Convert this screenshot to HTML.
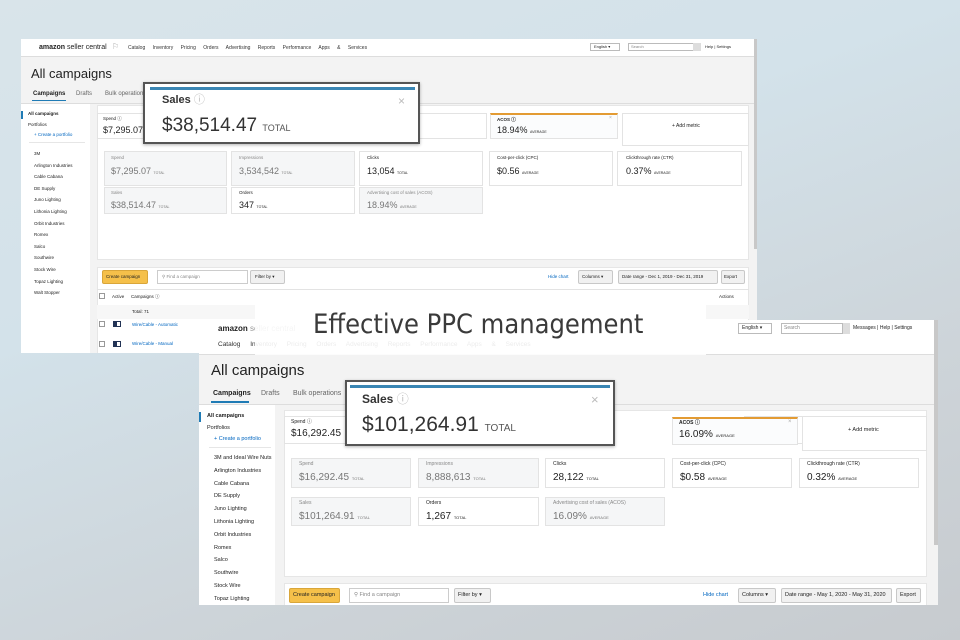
<!DOCTYPE html>
<html><head><meta charset="utf-8"><style>
*{margin:0;padding:0;box-sizing:border-box}
body{width:960px;height:640px;overflow:hidden;position:relative;background:linear-gradient(160deg,#d9e4ea 0%,#d3e2ea 35%,#cdd4d9 70%,#c7cbcf 100%);font-family:"Liberation Sans Narrow","Liberation Sans",sans-serif;color:#222}
div,span{position:absolute}
.t{white-space:nowrap;line-height:1}
.w{background:#fff}
.g{background:#f3f3f3}
.card{background:#fff;border:1px solid #e3e3e3}
.cg{background:#f5f6f7;border:1px solid #e3e3e3}
.lnk{color:#0066c0}
.btn{background:#f1f1f1;border:1px solid #c8c8c8;border-radius:2px}
</style></head><body>

<!-- ===== Screenshot 1 ===== -->
<div class="g" style="left:21px;top:39px;width:736px;height:314px;overflow:hidden">
  <div class="w" style="left:0;top:0;width:736px;height:18px;border-bottom:1px solid #ddd"></div>
  <span class="t" style="left:18px;top:5px;font-size:7px;font-weight:bold">amazon <span style="position:static;font-weight:normal">seller central</span></span>
  <span class="t" style="left:91px;top:4px;font-size:8px;color:#aaa">⚐</span>
  <span class="t" style="left:107px;top:7px;font-size:5px;color:#333;word-spacing:6px">Catalog Inventory Pricing Orders Advertising Reports Performance Apps&nbsp;&amp;&nbsp;Services</span>
  <div style="left:569px;top:4px;width:30px;height:8px;border:1px solid #bbb;background:#fff"></div>
  <span class="t" style="left:573px;top:6px;font-size:4px">English ▾</span>
  <div style="left:607px;top:4px;width:66px;height:8px;border:1px solid #bbb;background:#fff"></div>
  <div style="left:672px;top:4px;width:8px;height:8px;background:#ddd"></div>
  <span class="t" style="left:610px;top:6px;font-size:4px;color:#888">Search</span>
  <span class="t" style="left:684px;top:6px;font-size:4px">Help | Settings</span>
  <span class="t" style="left:10px;top:28px;font-size:13px">All campaigns</span>
  <span class="t" style="left:12px;top:52px;font-size:6px;font-weight:bold">Campaigns</span>
  <span class="t" style="left:55px;top:52px;font-size:6px;color:#666">Drafts</span>
  <span class="t" style="left:84px;top:52px;font-size:6px;color:#666">Bulk operations</span>
  <div style="left:11px;top:61px;width:34px;height:1px;background:#1f7bb5"></div>
  <div style="left:0;top:64px;width:736px;height:1px;background:#ddd"></div>
  <div class="w" style="left:0;top:65px;width:69px;height:250px"></div>
  <div style="left:0;top:72px;width:2px;height:8px;background:#1f7bb5"></div>
  <span class="t" style="left:7px;top:73px;font-size:4.5px;font-weight:bold">All campaigns</span>
  <span class="t" style="left:7px;top:84px;font-size:4.5px">Portfolios</span>
  <span class="t lnk" style="left:13px;top:94px;font-size:4.5px">+ Create a portfolio</span>
  <div style="left:8px;top:103px;width:56px;height:1px;background:#e6e6e6"></div>
  <span class="t" style="left:13px;top:109px;font-size:4.5px;line-height:11.6px;white-space:pre">3M
Arlington Industries
Cable Cabana
DE Supply
Juno Lighting
Lithonia Lighting
Orbit Industries
Romex
Salco
Southwire
Stock Wire
Topaz Lighting
Walt Stopper</span>
  <div class="w" style="left:76px;top:66px;width:652px;height:155px;border:1px solid #e6e6e6"></div>
  <div class="card" style="left:76px;top:74px;width:130px;height:26px"></div>
  <span class="t" style="left:82px;top:78px;font-size:4.5px">Spend ⓘ</span>
  <span class="t" style="left:82px;top:87px;font-size:9px">$7,295.07</span>
  <div class="card" style="left:346px;top:74px;width:120px;height:26px"></div>
  <div class="card" style="left:469px;top:74px;width:128px;height:26px;border-top:2px solid #e39b33;background:#fbfcfd"></div>
  <span class="t" style="left:476px;top:79px;font-size:4.5px;font-weight:bold">ACOS ⓘ</span>
  <span class="t" style="left:476px;top:87px;font-size:9px">18.94% <span style="position:static;font-size:3.5px">AVERAGE</span></span>
  <span class="t" style="left:588px;top:77px;font-size:5px;color:#aaa">×</span>
  <div class="card" style="left:601px;top:74px;width:127px;height:33px"></div>
  <span class="t" style="left:651px;top:85px;font-size:5px">+ Add metric</span>
  <!-- row 2 -->
  <div class="cg" style="left:83px;top:112px;width:123px;height:35px"></div>
  <span class="t" style="left:90px;top:117px;font-size:4.5px;color:#888">Spend</span>
  <span class="t" style="left:90px;top:128px;font-size:9px;color:#777">$7,295.07 <span style="position:static;font-size:3.5px">TOTAL</span></span>
  <div class="cg" style="left:210px;top:112px;width:124px;height:35px"></div>
  <span class="t" style="left:218px;top:117px;font-size:4.5px;color:#888">Impressions</span>
  <span class="t" style="left:218px;top:128px;font-size:9px;color:#777">3,534,542 <span style="position:static;font-size:3.5px">TOTAL</span></span>
  <div class="card" style="left:338px;top:112px;width:124px;height:35px"></div>
  <span class="t" style="left:346px;top:117px;font-size:4.5px">Clicks</span>
  <span class="t" style="left:346px;top:128px;font-size:9px">13,054 <span style="position:static;font-size:3.5px">TOTAL</span></span>
  <div class="card" style="left:468px;top:112px;width:124px;height:35px"></div>
  <span class="t" style="left:476px;top:117px;font-size:4.5px">Cost-per-click (CPC)</span>
  <span class="t" style="left:476px;top:128px;font-size:9px">$0.56 <span style="position:static;font-size:3.5px">AVERAGE</span></span>
  <div class="card" style="left:596px;top:112px;width:125px;height:35px"></div>
  <span class="t" style="left:605px;top:117px;font-size:4.5px">Clickthrough rate (CTR)</span>
  <span class="t" style="left:605px;top:128px;font-size:9px">0.37% <span style="position:static;font-size:3.5px">AVERAGE</span></span>
  <!-- row 3 -->
  <div class="cg" style="left:83px;top:148px;width:123px;height:27px"></div>
  <span class="t" style="left:90px;top:152px;font-size:4.5px;color:#888">Sales</span>
  <span class="t" style="left:90px;top:162px;font-size:9px;color:#777">$38,514.47 <span style="position:static;font-size:3.5px">TOTAL</span></span>
  <div class="card" style="left:210px;top:148px;width:124px;height:27px"></div>
  <span class="t" style="left:218px;top:152px;font-size:4.5px">Orders</span>
  <span class="t" style="left:218px;top:162px;font-size:9px">347 <span style="position:static;font-size:3.5px">TOTAL</span></span>
  <div class="cg" style="left:338px;top:148px;width:124px;height:27px"></div>
  <span class="t" style="left:346px;top:152px;font-size:4.5px;color:#888">Advertising cost of sales (ACOS)</span>
  <span class="t" style="left:346px;top:162px;font-size:9px;color:#777">18.94% <span style="position:static;font-size:3.5px">AVERAGE</span></span>
  <!-- toolbar -->
  <div class="w" style="left:76px;top:228px;width:652px;height:90px;border:1px solid #e6e6e6"></div>
  <div style="left:81px;top:231px;width:46px;height:14px;background:#f5c04a;border:1px solid #d9a63a;border-radius:2px"></div>
  <span class="t" style="left:85px;top:236px;font-size:4.5px">Create campaign</span>
  <div style="left:136px;top:231px;width:91px;height:14px;border:1px solid #ccc;background:#fff"></div>
  <span class="t" style="left:141px;top:236px;font-size:4.5px;color:#888">⚲ Find a campaign</span>
  <div class="btn" style="left:229px;top:231px;width:35px;height:14px"></div>
  <span class="t" style="left:234px;top:236px;font-size:4.5px">Filter by ▾</span>
  <span class="t lnk" style="left:527px;top:236px;font-size:4.5px">Hide chart</span>
  <div class="btn" style="left:557px;top:231px;width:35px;height:14px"></div>
  <span class="t" style="left:561px;top:236px;font-size:4.5px">Columns ▾</span>
  <div class="btn" style="left:597px;top:231px;width:100px;height:14px"></div>
  <span class="t" style="left:601px;top:236px;font-size:4.5px">Date range - Dec 1, 2019 - Dec 31, 2019</span>
  <div class="btn" style="left:700px;top:231px;width:24px;height:14px"></div>
  <span class="t" style="left:703px;top:236px;font-size:4.5px">Export</span>
  <div style="left:76px;top:250px;width:652px;height:1px;background:#e3e3e3"></div>
  <div style="left:78px;top:254px;width:6px;height:6px;border:1px solid #999"></div>
  <span class="t" style="left:91px;top:256px;font-size:4.5px">Active</span>
  <span class="t" style="left:110px;top:256px;font-size:4.5px">Campaigns ⓘ</span>
  <span class="t" style="left:698px;top:256px;font-size:4.5px">Actions</span>
  <div style="left:76px;top:266px;width:652px;height:14px;background:#f7f7f7"></div>
  <span class="t" style="left:111px;top:271px;font-size:4.5px">Total: 71</span>
  <div style="left:78px;top:282px;width:6px;height:6px;border:1px solid #999"></div>
  <div style="left:92px;top:282px;width:8px;height:6px;border:1px solid #235;background:linear-gradient(90deg,#235 50%,#fff 50%)"></div>
  <span class="t lnk" style="left:111px;top:284px;font-size:4.5px">Wire/Cable - Automatic</span>
  <div style="left:78px;top:302px;width:6px;height:6px;border:1px solid #999"></div>
  <div style="left:92px;top:302px;width:8px;height:6px;border:1px solid #235;background:linear-gradient(90deg,#235 50%,#fff 50%)"></div>
  <span class="t lnk" style="left:111px;top:303px;font-size:4.5px">Wire/Cable - Manual</span>
  <div style="left:733px;top:0;width:3px;height:210px;background:#c8c8c8"></div>
</div>
<!-- popup 1 -->
<div style="left:143px;top:82px;width:277px;height:62px;background:#fff;border:2px solid #555;box-shadow:0 1px 3px rgba(0,0,0,.3)"></div>
<div style="left:150px;top:87px;width:265px;height:3px;background:#3a86b4"></div>
<span class="t" style="left:162px;top:95px;font-size:11px;font-weight:bold;color:#333">Sales <span style="position:static;color:#bbb;font-weight:normal">ⓘ</span></span>
<span class="t" style="left:398px;top:95px;font-size:12px;color:#bbb">×</span>
<span class="t" style="left:162px;top:116px;font-size:19px;color:#333">$38,514.47 <span style="position:static;font-size:9px;color:#555">TOTAL</span></span>

<!-- ===== Screenshot 2 ===== -->
<div class="g" style="left:199px;top:320px;width:739px;height:285px;overflow:hidden">
  <div class="w" style="left:0;top:0;width:739px;height:35px;border-bottom:1px solid #ddd"></div>
  <span class="t" style="left:19px;top:5px;font-size:8px;font-weight:bold">amazon <span style="position:static;font-weight:normal;color:#999">seller central</span></span>
  <span class="t" style="left:19px;top:22px;font-size:6.5px;color:#333;word-spacing:8px">Catalog Inventory Pricing Orders Advertising Reports Performance Apps&nbsp;&amp;&nbsp;Services</span>
  <div style="left:539px;top:3px;width:34px;height:11px;border:1px solid #bbb;background:#fff"></div>
  <span class="t" style="left:543px;top:6px;font-size:5px">English ▾</span>
  <div style="left:582px;top:3px;width:62px;height:11px;border:1px solid #bbb;background:#fff"></div>
  <div style="left:644px;top:3px;width:7px;height:11px;background:#ddd"></div>
  <span class="t" style="left:585px;top:6px;font-size:5px;color:#888">Search</span>
  <span class="t" style="left:654px;top:6px;font-size:5px">Messages | Help | Settings</span>
  <span class="t" style="left:12px;top:43px;font-size:15px">All campaigns</span>
  <span class="t" style="left:14px;top:70px;font-size:7px;font-weight:bold">Campaigns</span>
  <span class="t" style="left:62px;top:70px;font-size:7px;color:#666">Drafts</span>
  <span class="t" style="left:94px;top:70px;font-size:7px;color:#666">Bulk operations</span>
  <div style="left:12px;top:81px;width:38px;height:2px;background:#1f7bb5"></div>
  <div style="left:0;top:84px;width:739px;height:1px;background:#ddd"></div>
  <div class="w" style="left:0;top:85px;width:76px;height:210px"></div>
  <div style="left:0;top:92px;width:2px;height:10px;background:#1f7bb5"></div>
  <span class="t" style="left:8px;top:94px;font-size:5.5px;font-weight:bold">All campaigns</span>
  <span class="t" style="left:8px;top:106px;font-size:5.5px">Portfolios</span>
  <span class="t lnk" style="left:15px;top:117px;font-size:5.5px">+ Create a portfolio</span>
  <div style="left:10px;top:127px;width:62px;height:1px;background:#e6e6e6"></div>
  <span class="t" style="left:15px;top:132px;font-size:5.5px;line-height:12.8px;white-space:pre">3M and Ideal Wire Nuts
Arlington Industries
Cable Cabana
DE Supply
Juno Lighting
Lithonia Lighting
Orbit Industries
Romex
Salco
Southwire
Stock Wire
Topaz Lighting</span>
  <div class="w" style="left:85px;top:90px;width:643px;height:167px;border:1px solid #e6e6e6"></div>
  <div class="card" style="left:85px;top:96px;width:130px;height:28px"></div>
  <span class="t" style="left:92px;top:100px;font-size:5px">Spend ⓘ</span>
  <span class="t" style="left:92px;top:109px;font-size:10px">$16,292.45</span>
  <div class="card" style="left:545px;top:96px;width:126px;height:28px"></div>
  <span class="t" style="left:654px;top:99px;font-size:6px;color:#aaa">×</span>
  <div class="card" style="left:473px;top:97px;width:126px;height:28px;border-top:2px solid #e39b33;background:#fbfcfd"></div>
  <span class="t" style="left:480px;top:101px;font-size:5px;font-weight:bold">ACOS ⓘ</span>
  <span class="t" style="left:480px;top:110px;font-size:10px">16.09% <span style="position:static;font-size:4px">AVERAGE</span></span>
  <span class="t" style="left:589px;top:99px;font-size:6px;color:#aaa">×</span>
  <div class="card" style="left:603px;top:96px;width:125px;height:35px"></div>
  <span class="t" style="left:649px;top:108px;font-size:5.5px">+ Add metric</span>
  <div class="cg" style="left:92px;top:138px;width:120px;height:30px"></div>
  <span class="t" style="left:100px;top:142px;font-size:5px;color:#888">Spend</span>
  <span class="t" style="left:100px;top:153px;font-size:10px;color:#777">$16,292.45 <span style="position:static;font-size:4px">TOTAL</span></span>
  <div class="cg" style="left:219px;top:138px;width:121px;height:30px"></div>
  <span class="t" style="left:227px;top:142px;font-size:5px;color:#888">Impressions</span>
  <span class="t" style="left:227px;top:153px;font-size:10px;color:#777">8,888,613 <span style="position:static;font-size:4px">TOTAL</span></span>
  <div class="card" style="left:346px;top:138px;width:120px;height:30px"></div>
  <span class="t" style="left:354px;top:142px;font-size:5px">Clicks</span>
  <span class="t" style="left:354px;top:153px;font-size:10px">28,122 <span style="position:static;font-size:4px">TOTAL</span></span>
  <div class="card" style="left:473px;top:138px;width:120px;height:30px"></div>
  <span class="t" style="left:481px;top:142px;font-size:5px">Cost-per-click (CPC)</span>
  <span class="t" style="left:481px;top:153px;font-size:10px">$0.58 <span style="position:static;font-size:4px">AVERAGE</span></span>
  <div class="card" style="left:600px;top:138px;width:120px;height:30px"></div>
  <span class="t" style="left:608px;top:142px;font-size:5px">Clickthrough rate (CTR)</span>
  <span class="t" style="left:608px;top:153px;font-size:10px">0.32% <span style="position:static;font-size:4px">AVERAGE</span></span>
  <div class="cg" style="left:92px;top:177px;width:120px;height:29px"></div>
  <span class="t" style="left:100px;top:181px;font-size:5px;color:#888">Sales</span>
  <span class="t" style="left:100px;top:192px;font-size:10px;color:#777">$101,264.91 <span style="position:static;font-size:4px">TOTAL</span></span>
  <div class="card" style="left:219px;top:177px;width:121px;height:29px"></div>
  <span class="t" style="left:227px;top:181px;font-size:5px">Orders</span>
  <span class="t" style="left:227px;top:192px;font-size:10px">1,267 <span style="position:static;font-size:4px">TOTAL</span></span>
  <div class="cg" style="left:346px;top:177px;width:120px;height:29px"></div>
  <span class="t" style="left:354px;top:181px;font-size:5px;color:#888">Advertising cost of sales (ACOS)</span>
  <span class="t" style="left:354px;top:192px;font-size:10px;color:#777">16.09% <span style="position:static;font-size:4px">AVERAGE</span></span>
  <div class="w" style="left:85px;top:263px;width:643px;height:30px;border:1px solid #e6e6e6"></div>
  <div style="left:90px;top:268px;width:51px;height:15px;background:#f5c04a;border:1px solid #d9a63a;border-radius:2px"></div>
  <span class="t" style="left:94px;top:273px;font-size:5.5px">Create campaign</span>
  <div style="left:150px;top:268px;width:100px;height:15px;border:1px solid #ccc;background:#fff"></div>
  <span class="t" style="left:155px;top:273px;font-size:5.5px;color:#888">⚲ Find a campaign</span>
  <div class="btn" style="left:255px;top:268px;width:37px;height:15px"></div>
  <span class="t" style="left:259px;top:273px;font-size:5.5px">Filter by ▾</span>
  <span class="t lnk" style="left:504px;top:273px;font-size:5.5px">Hide chart</span>
  <div class="btn" style="left:539px;top:268px;width:38px;height:15px"></div>
  <span class="t" style="left:543px;top:273px;font-size:5.5px">Columns ▾</span>
  <div class="btn" style="left:582px;top:268px;width:111px;height:15px"></div>
  <span class="t" style="left:586px;top:273px;font-size:5.5px">Date range - May 1, 2020 - May 31, 2020</span>
  <div class="btn" style="left:697px;top:268px;width:25px;height:15px"></div>
  <span class="t" style="left:701px;top:273px;font-size:5.5px">Export</span>
  <div style="left:735px;top:0;width:4px;height:225px;background:#c8c8c8"></div>
</div>
<!-- popup 2 -->
<div style="left:345px;top:380px;width:270px;height:66px;background:#fff;border:2px solid #555;box-shadow:0 1px 3px rgba(0,0,0,.3)"></div>
<div style="left:350px;top:385px;width:260px;height:3px;background:#3a86b4"></div>
<span class="t" style="left:362px;top:393px;font-size:12px;font-weight:bold;color:#333">Sales <span style="position:static;color:#bbb;font-weight:normal">ⓘ</span></span>
<span class="t" style="left:591px;top:393px;font-size:13px;color:#bbb">×</span>
<span class="t" style="left:362px;top:414px;font-size:21px;color:#333">$101,264.91 <span style="position:static;font-size:10px;color:#555">TOTAL</span></span>

<!-- banner -->
<div style="left:255px;top:290px;width:451px;height:65px;background:rgba(255,255,255,.9)"></div>
<span class="t" style="left:313px;top:311px;font-size:27px;color:#3a3a3a;font-family:'DejaVu Sans Condensed','Liberation Sans',sans-serif">Effective PPC management</span>
</body></html>
